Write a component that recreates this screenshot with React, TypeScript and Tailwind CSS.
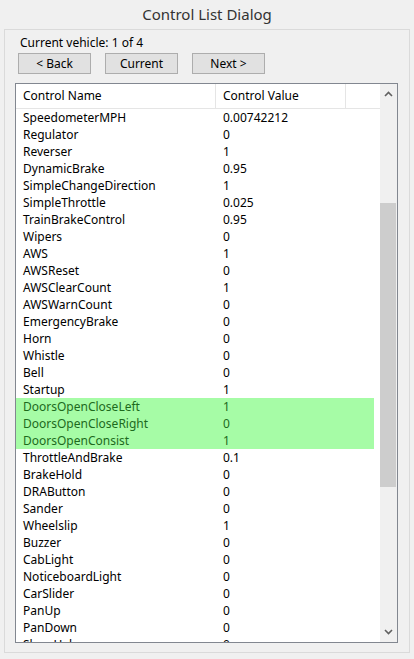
import React from "react";

type Row = { name: string; value: string; doors?: boolean };

const rows: Row[] = [
  { name: "SpeedometerMPH", value: "0.00742212" },
  { name: "Regulator", value: "0" },
  { name: "Reverser", value: "1" },
  { name: "DynamicBrake", value: "0.95" },
  { name: "SimpleChangeDirection", value: "1" },
  { name: "SimpleThrottle", value: "0.025" },
  { name: "TrainBrakeControl", value: "0.95" },
  { name: "Wipers", value: "0" },
  { name: "AWS", value: "1" },
  { name: "AWSReset", value: "0" },
  { name: "AWSClearCount", value: "1" },
  { name: "AWSWarnCount", value: "0" },
  { name: "EmergencyBrake", value: "0" },
  { name: "Horn", value: "0" },
  { name: "Whistle", value: "0" },
  { name: "Bell", value: "0" },
  { name: "Startup", value: "1" },
  { name: "DoorsOpenCloseLeft", value: "1", doors: true },
  { name: "DoorsOpenCloseRight", value: "0", doors: true },
  { name: "DoorsOpenConsist", value: "1", doors: true },
  { name: "ThrottleAndBrake", value: "0.1" },
  { name: "BrakeHold", value: "0" },
  { name: "DRAButton", value: "0" },
  { name: "Sander", value: "0" },
  { name: "Wheelslip", value: "1" },
  { name: "Buzzer", value: "0" },
  { name: "CabLight", value: "0" },
  { name: "NoticeboardLight", value: "0" },
  { name: "CarSlider", value: "0" },
  { name: "PanUp", value: "0" },
  { name: "PanDown", value: "0" },
  { name: "ShowHelp", value: "0" },
];

function NavButton({ label }: { label: string }) {
  return (
    <button className="w-[73px] h-[21px] bg-[#e1e1e1] border border-[#adadad] text-[12px] leading-none text-black">
      {label}
    </button>
  );
}

function Chevron({ down }: { down?: boolean }) {
  return (
    <svg width="9" height="6" viewBox="0 0 9 6" className={down ? "rotate-180" : ""}>
      <path d="M1 5 L4.5 1.5 L8 5" fill="none" stroke="#606060" strokeWidth="1.6" />
    </svg>
  );
}

export default function App() {
  return (
    <div
      className="w-[414px] h-[659px] overflow-hidden bg-[#f0f0f0] flex flex-col text-black"
      style={{ fontFamily: '"Noto Sans", "Open Sans", sans-serif' }}
    >
      {/* Title */}
      <div className="h-[29px] flex items-center justify-center text-[15px] text-[#333333]">
        Control List Dialog
      </div>

      {/* Dialog body */}
      <div className="ml-[4px] w-[406px] h-[624px] border border-[#dadada] flex flex-col">
        <div className="ml-[15px] mt-[5px] h-[16px] flex items-center text-[12px]">
          Current vehicle: 1 of 4
        </div>
        <div className="ml-[13px] mt-[2px] flex gap-[14px]">
          <NavButton label="< Back" />
          <NavButton label="Current" />
          <NavButton label="Next >" />
        </div>

        {/* List view */}
        <div className="ml-[10px] mt-[9px] w-[383px] h-[560px] border border-[#828790] bg-white flex overflow-hidden">
          <div className="w-[364px] flex flex-col text-[12px]">
            <div className="h-[25px] shrink-0 flex border-b border-[#e5e5e5]">
              <div className="w-[200px] pl-[7px] flex items-center border-r border-[#e5e5e5]">
                Control Name
              </div>
              <div className="w-[130px] pl-[7px] flex items-center border-r border-[#e5e5e5]">
                Control Value
              </div>
              <div className="flex-1" />
            </div>
            {rows.map((r) => (
              <div
                key={r.name}
                className={`h-[17px] shrink-0 w-[358px] flex items-center ${
                  r.doors ? "bg-[#a6fca6] text-[#1d6a1d]" : ""
                }`}
              >
                <div className="w-[200px] pl-[7px] whitespace-nowrap">{r.name}</div>
                <div className="pl-[7px]">{r.value}</div>
              </div>
            ))}
          </div>

          {/* Scrollbar */}
          <div className="w-[17px] bg-[#f0f0f0] flex flex-col items-center">
            <div className="h-[20px] flex items-center justify-center">
              <Chevron />
            </div>
            <div className="w-full flex-1 pt-[99px] pr-[1px]">
              <div className="h-[284px] bg-[#cdcdcd]" />
            </div>
            <div className="h-[20px] flex items-center justify-center">
              <Chevron down />
            </div>
          </div>
        </div>
      </div>
    </div>
  );
}
